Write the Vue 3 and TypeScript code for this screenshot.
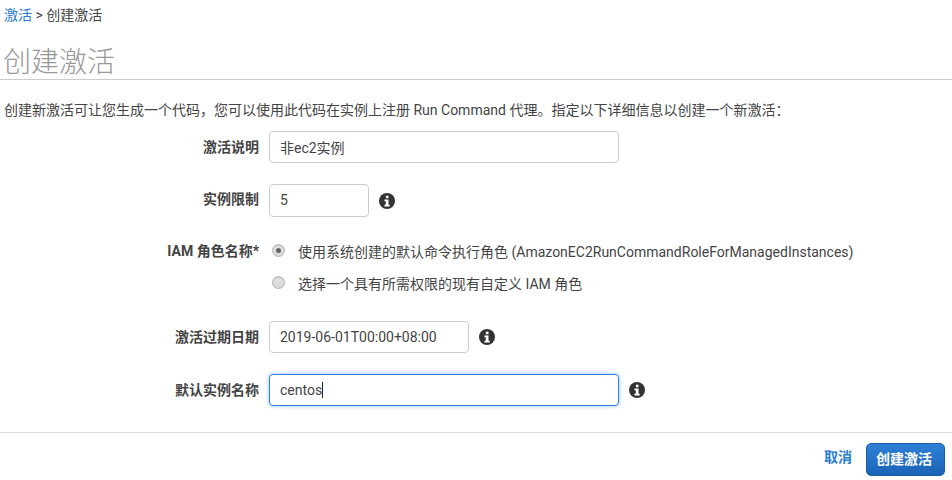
<script setup lang="ts">
const infoDot = 'M5.4 6.5h4.1v5.2h1.2v1.8H5.4v-1.8h1.4V8.3H5.4z'
</script>

<template>
  <div class="page">
    <nav class="crumbs"><a class="link">激活</a> &gt; 创建激活</nav>
    <h1 class="title">创建激活</h1>
    <p class="intro">创建新激活可让您生成一个代码，您可以使用此代码在实例上注册 Run Command 代理。指定以下详细信息以创建一个新激活：</p>

    <form class="form">
      <div class="row row-desc">
        <label class="label">激活说明</label>
        <input class="field wide" value="非ec2实例" />
      </div>
      <div class="row row-limit">
        <label class="label">实例限制</label>
        <input class="field small" value="5" />
        <svg class="info" viewBox="0 0 16 16"><circle cx="8" cy="8" r="8" fill="#333" /><rect x="6.9" y="2.7" width="2.6" height="2.5" fill="#fff" /><path :d="infoDot" fill="#fff" /></svg>
      </div>

      <div class="roles">
        <label class="label">IAM 角色名称*</label>
        <div class="role-options">
          <div class="option"><span class="radio checked"></span><span>使用系统创建的默认命令执行角色 (AmazonEC2RunCommandRoleForManagedInstances)</span></div>
          <div class="option"><span class="radio"></span><span>选择一个具有所需权限的现有自定义 IAM 角色</span></div>
        </div>
      </div>

      <div class="row row-date">
        <label class="label">激活过期日期</label>
        <input class="field medium" value="2019-06-01T00:00+08:00" />
        <svg class="info" viewBox="0 0 16 16"><circle cx="8" cy="8" r="8" fill="#333" /><rect x="6.9" y="2.7" width="2.6" height="2.5" fill="#fff" /><path :d="infoDot" fill="#fff" /></svg>
      </div>
      <div class="row row-name">
        <label class="label">默认实例名称</label>
        <div class="field wide focused">centos<i class="caret"></i></div>
        <svg class="info" viewBox="0 0 16 16"><circle cx="8" cy="8" r="8" fill="#333" /><rect x="6.9" y="2.7" width="2.6" height="2.5" fill="#fff" /><path :d="infoDot" fill="#fff" /></svg>
      </div>
    </form>

    <footer class="footer">
      <a class="cancel">取消</a>
      <button type="button" class="primary">创建激活</button>
    </footer>
  </div>
</template>

<style>
html, body { margin: 0; background: #fff; }
</style>

<style scoped>
.page {
  width: 952px;
  height: 480px;
  overflow: hidden;
  box-sizing: border-box;
  font-family: Roboto, "Noto Sans CJK SC", sans-serif;
  font-size: 14px;
  color: #444;
}
.crumbs { padding: 6px 0 0 4px; line-height: 18px; height: 19px; }
.link { color: #2b7bd3; }
.title {
  margin: 14px 0 0;
  padding: 4px 0 0 3px;
  height: 36px;
  font-size: 28px;
  line-height: 40px;
  font-weight: 300;
  color: #999;
  border-bottom: 1px solid #ccc;
}
.intro { margin: 20px 0 0 4px; line-height: 20px; color: #444; }
.form { display: flex; flex-direction: column; }
.row { display: flex; align-items: center; height: 32px; }
.row-desc { margin-top: 11px; }
.row-limit { margin-top: 21px; height: 33px; }
.row-limit .label { padding-bottom: 3px; }
.row-limit .field { padding-bottom: 2px; }
.row-date { margin-top: 28px; }
.row-name { margin-top: 21px; }
.label {
  width: 259px;
  flex: none;
  text-align: right;
  font-weight: 700;
  color: #444;
  line-height: 20px;
}
.field {
  margin-left: 10px;
  box-sizing: border-box;
  height: 100%;
  padding: 0 10px;
  border: 1px solid #ccc;
  border-radius: 4px;
  font: inherit;
  color: #444;
  background: #fff;
  outline: none;
  display: flex;
  align-items: center;
}
.wide { width: 350px; }
.small { width: 100px; }
.medium { width: 200px; }
.focused {
  border-color: #2f81d8;
  box-shadow: 0 0 4px rgba(47, 129, 216, 0.5);
}
.caret { display: inline-block; width: 1px; height: 16px; background: #222; }
.info { width: 16px; height: 16px; margin-left: 10px; flex: none; }
.roles { display: flex; margin-top: 24px; }
.role-options { display: flex; flex-direction: column; gap: 12px; margin-left: 13px; }
.option { display: flex; align-items: center; height: 20px; gap: 13px; color: #444; }
.radio {
  position: relative;
  width: 13px;
  height: 13px;
  box-sizing: border-box;
  border-radius: 50%;
  border: 1px solid #b5b5b5;
  background: linear-gradient(#e4e4e4, #d8d8d8);
  box-shadow: inset 0 1px 1px rgba(0, 0, 0, 0.12);
  margin-bottom: 2px;
  flex: none;
}
.radio.checked::after {
  content: "";
  position: absolute;
  left: 3px;
  top: 3px;
  width: 5px;
  height: 5px;
  border-radius: 50%;
  background: #666;
}
.footer {
  margin-top: 26px;
  border-top: 1px solid #ddd;
  display: flex;
  justify-content: flex-end;
  gap: 14px;
  padding: 10px 7px 0 0;
}
.cancel { color: #2b7bd3; font-weight: 700; height: 33px; line-height: 29px; }
.primary {
  width: 79px;
  height: 33px;
  border: 1px solid #1a5ea8;
  border-radius: 5px;
  background: linear-gradient(#2f80d8, #1b63b5);
  color: #fff;
  font: inherit;
  font-weight: 700;
  padding: 0 3px 3px 0;
}
</style>
